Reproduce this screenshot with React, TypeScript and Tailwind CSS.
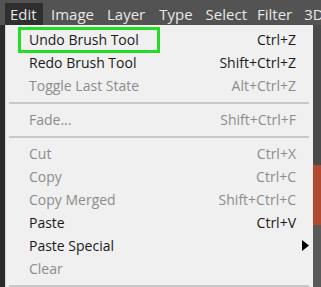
import React from "react";

type Item =
  | { type: "item"; label: string; shortcut?: string; disabled?: boolean; arrow?: boolean; selected?: boolean }
  | { type: "sep" };

const items: Item[] = [
  { type: "item", label: "Undo Brush Tool", shortcut: "Ctrl+Z", selected: true },
  { type: "item", label: "Redo Brush Tool", shortcut: "Shift+Ctrl+Z" },
  { type: "item", label: "Toggle Last State", shortcut: "Alt+Ctrl+Z", disabled: true },
  { type: "sep" },
  { type: "item", label: "Fade...", shortcut: "Shift+Ctrl+F", disabled: true },
  { type: "sep" },
  { type: "item", label: "Cut", shortcut: "Ctrl+X", disabled: true },
  { type: "item", label: "Copy", shortcut: "Ctrl+C", disabled: true },
  { type: "item", label: "Copy Merged", shortcut: "Shift+Ctrl+C", disabled: true },
  { type: "item", label: "Paste", shortcut: "Ctrl+V" },
  { type: "item", label: "Paste Special", arrow: true },
  { type: "item", label: "Clear", disabled: true },
  { type: "sep" },
];

export default function App() {
  return (
    <div
      className="w-[321px] h-[287px] overflow-hidden bg-[#2a2a2a] flex flex-col"
      style={{ fontFamily: '"Open Sans", "Noto Sans", sans-serif' }}
    >
      <div className="h-[25px] shrink-0 bg-[#535353] flex items-end text-[15px] text-[#e8e8e8] overflow-hidden whitespace-nowrap">
        <div className="w-[5px] h-[22px] shrink-0" />
        <div className="h-[22px] w-[38px] shrink-0 bg-[#2f2f2f] flex items-center pl-[5px] leading-none">Edit</div>
        <div className="flex items-center h-[22px] leading-none shrink-0">
          <span className="ml-[8px]">Image</span>
          <span className="ml-[13px]">Layer</span>
          <span className="ml-[14px]">Type</span>
          <span className="ml-[13px]">Select</span>
          <span className="ml-[10px]">Filter</span>
          <span className="ml-[12px]">3D</span>
        </div>
      </div>
      <div className="flex flex-1">
        <div className="w-[5px] shrink-0 bg-[#2a2a2a]" />
        <div className="w-[308px] shrink-0 bg-[#f0f0f0] border-l border-[#d8d8d8] pt-[3px] pl-[2px] pr-[3px] text-[14px]">
          {items.map((it, i) =>
            it.type === "sep" ? (
              <div key={i} className="h-[11px] flex items-center px-[1px]">
                <div className="h-[2px] w-full bg-[#c8c8c8]" />
              </div>
            ) : (
              <div
                key={i}
                className={`h-[23px] flex items-center pl-[21px] pr-[14px] relative ${
                  it.disabled ? "text-[#8c8c8c]" : "text-[#1a1a1a]"
                }`}
              >
                {it.selected && (
                  <div className="absolute left-[10px] top-[-1px] w-[142px] h-[26px] border-[3px] border-[#22dd22]" />
                )}
                <span className="flex-1 leading-none">{it.label}</span>
                {it.shortcut && <span className="leading-none">{it.shortcut}</span>}
                {it.arrow && (
                  <svg width="7" height="11" viewBox="0 0 7 11" className="mr-[-13px]">
                    <path d="M0 0 L7 5.5 L0 11 Z" fill="#000" />
                  </svg>
                )}
              </div>
            )
          )}
        </div>
        <div className="flex-1 bg-[#3a3a3a] flex flex-col">
          <div className="h-[140px] bg-[#4a4a4a]" />
          <div className="h-[60px] bg-[#b04a30]" />
          <div className="flex-1 bg-[#5a5a5a]" />
        </div>
      </div>
    </div>
  );
}
